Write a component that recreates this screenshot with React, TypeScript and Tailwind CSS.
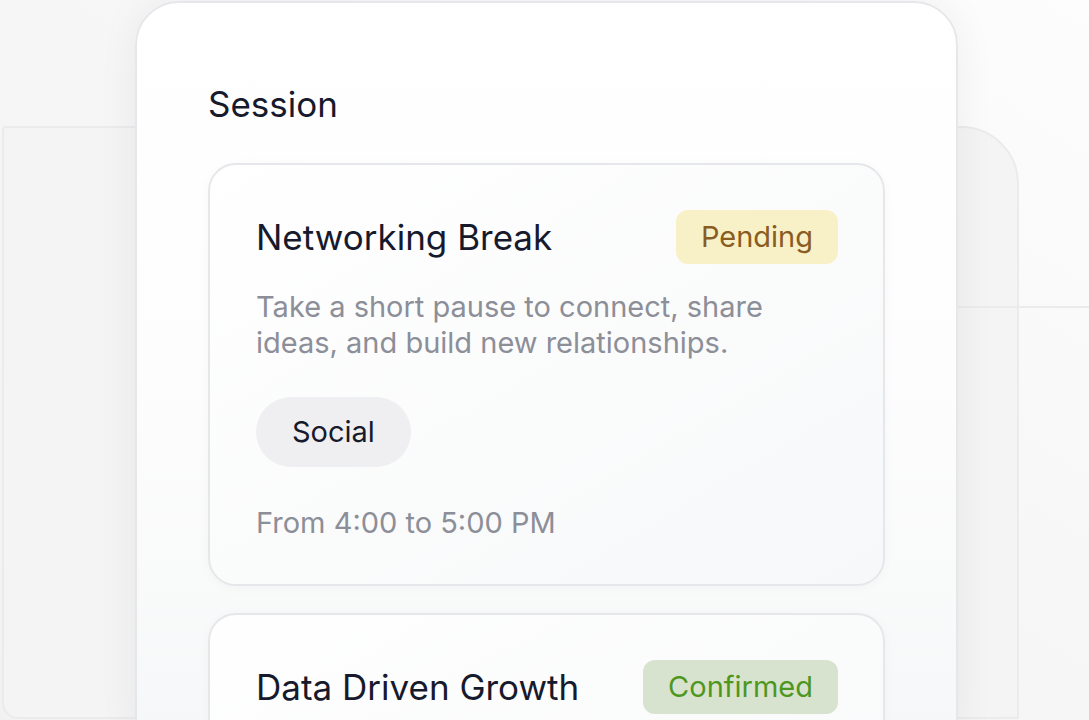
const sessions = [
  {
    title: 'Networking Break',
    status: 'Pending',
    desc: 'Take a short pause to connect, share ideas, and build new relationships.',
    tag: 'Social',
    time: 'From 4:00 to 5:00 PM',
  },
  {
    title: 'Data Driven Growth',
    status: 'Confirmed',
    desc: 'Learn how teams use analytics to make better product decisions.',
    tag: 'Talk',
    time: 'From 5:00 to 6:00 PM',
  },
];

const statusStyles: Record<string, string> = {
  Pending: 'bg-[#f8f1c8] text-[#8b5c1f]',
  Confirmed: 'bg-[#d8e3cf] text-[#4e971f]',
};

export default function App() {
  return (
    <div
      className="relative h-[720px] w-[1089px] overflow-hidden bg-gradient-to-bl from-[#fdfdfd] via-[#f6f6f7] to-[#f2f2f3]"
      style={{ fontFamily: 'Inter, "Noto Sans", sans-serif' }}
    >
      {/* decorative back panel */}
      <div className="absolute left-[2px] top-[126px] h-[593px] w-[1017px] rounded-tl-[4px] rounded-tr-[58px] rounded-bl-[16px] border-2 border-[#ebebed] bg-[#f4f4f5]" />
      <div className="absolute left-[958px] top-[306px] h-[2px] w-[140px] bg-[#ebebed]" />

      <div className="relative ml-[135px] mt-[1px] w-[823px] h-[760px] rounded-[44px] border-2 border-[#e6e7eb] bg-gradient-to-b from-white via-[#fdfdfd] to-[#f6f7f8] shadow-[0_0_40px_rgba(0,0,0,0.06)] px-[71px] pt-[80px]">
        <h1 className="text-[35px] leading-[42px] text-[#171a2c]">Session</h1>

        <div className="mt-[38px] flex flex-col gap-[27px]">
          {sessions.map((s) => (
            <div
              key={s.title}
              className="rounded-[28px] border-2 border-[#e6e7ea] bg-gradient-to-br from-white/90 to-[#f7f8f9] shadow-[0_2px_12px_rgba(0,0,0,0.03)] pl-[46px] pr-[45px] pt-[45px] pb-[43px]"
            >
              <div className="flex items-center justify-between h-[54px]">
                <span className="text-[35px] leading-[54px] text-[#171a2c]">{s.title}</span>
                <span className={`h-[54px] rounded-[12px] px-[25px] text-[29px] leading-[54px] ${statusStyles[s.status]}`}>
                  {s.status}
                </span>
              </div>
              <p className="mt-[25px] w-[540px] text-[29px] leading-[36px] text-[#8c8e98]">{s.desc}</p>
              <div className="mt-[36px] flex">
                <span className="h-[70px] rounded-full bg-[#efeff1] px-[36px] text-[29px] leading-[70px] text-[#171a2c]">
                  {s.tag}
                </span>
              </div>
              <p className="mt-[38px] text-[29px] leading-[36px] text-[#8c8e98]">{s.time}</p>
            </div>
          ))}
        </div>
      </div>
    </div>
  );
}
